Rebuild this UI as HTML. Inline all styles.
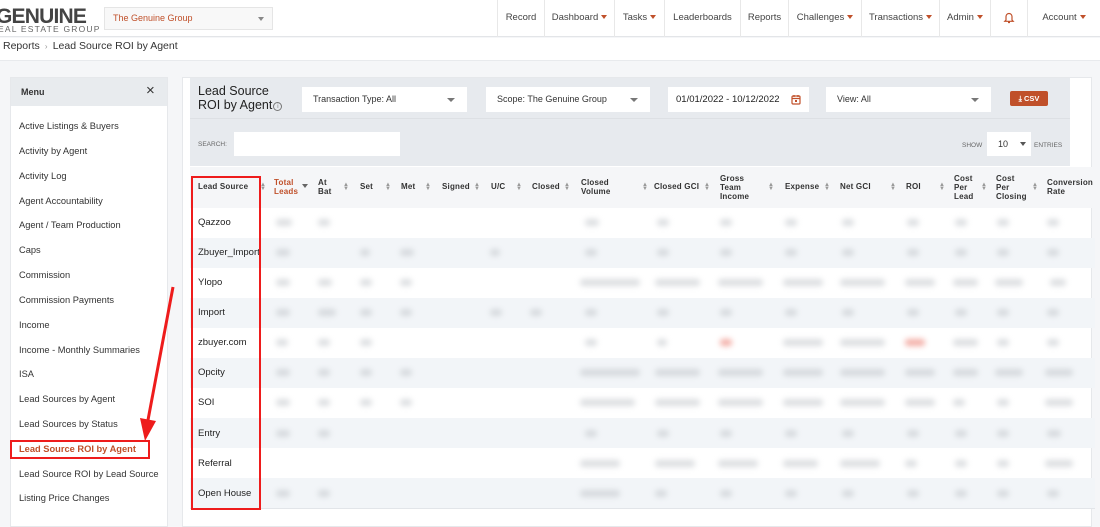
<!DOCTYPE html>
<html><head><meta charset="utf-8"><style>
*{margin:0;padding:0;box-sizing:border-box}
body{width:1100px;height:519px;overflow:hidden;background:#f5f6f8;font-family:"Liberation Sans",sans-serif;color:#333;position:relative}
.a{position:absolute}
.hdr{left:0;top:0;width:1100px;height:37px;background:#fff;border-bottom:1px solid #e3e5e8}
.nav{top:0;height:37px;font-size:9.5px;color:#444;line-height:36px;border-left:1px solid #e8e8e8;text-align:center}
.car{display:inline-block;width:0;height:0;border-left:3px solid transparent;border-right:3px solid transparent;border-top:4px solid #c0502a;margin-left:3px;vertical-align:1px}
.mi{left:19px;font-size:9.3px;color:#333;white-space:nowrap}
.sel{background:#fff;height:25px;font-size:9px;line-height:25px;padding-left:11px;color:#333}
.sel:after{content:"";position:absolute;right:12px;top:11px;border-left:4px solid transparent;border-right:4px solid transparent;border-top:4px solid #777}
.th{font-size:8px;font-weight:bold;color:#333;line-height:9px;letter-spacing:.2px}
.so{font-size:6px;color:#999;line-height:4px}
.row{left:190px;width:905px;height:30px}
.ls{left:198px;font-size:9.5px;color:#222}
.b{position:absolute;height:7px;background:#bfc3c8;filter:blur(3px);border-radius:3px;opacity:.55}
</style></head><body>
<div class="a hdr"></div>
<div class="a" style="left:-4px;top:6px;font-size:21px;font-weight:bold;color:#444;letter-spacing:-0.8px;line-height:21px">GENUINE</div>
<div class="a" style="left:-2px;top:24px;font-size:8.5px;color:#666;letter-spacing:1.2px">EAL ESTATE GROUP</div>
<div class="a" style="left:104px;top:7px;width:169px;height:23px;background:#f8f8f8;border:1px solid #e5e5e5;font-size:9px;color:#c0502a;line-height:21px;padding-left:8px">The Genuine Group<span style="position:absolute;right:8px;top:9px;border-left:3px solid transparent;border-right:3px solid transparent;border-top:4px solid #888"></span></div>
<div class="a nav" style="left:497px;width:47px">Record</div>
<div class="a nav" style="left:544px;width:70px">Dashboard<span class="car"></span></div>
<div class="a nav" style="left:614px;width:50px">Tasks<span class="car"></span></div>
<div class="a nav" style="left:664px;width:76px">Leaderboards</div>
<div class="a nav" style="left:740px;width:48px">Reports</div>
<div class="a nav" style="left:788px;width:73px">Challenges<span class="car"></span></div>
<div class="a nav" style="left:861px;width:78px">Transactions<span class="car"></span></div>
<div class="a nav" style="left:939px;width:51px">Admin<span class="car"></span></div>
<div class="a nav" style="left:990px;width:37px"><svg width="12" height="13" viewBox="0 0 12 13" style="vertical-align:middle"><path d="M3 9V5.5a3 3 0 0 1 6 0V9l1.2 1.3H1.8L3 9zM5 11.5h2" fill="none" stroke="#c0502a" stroke-width="1.2"/></svg></div>
<div class="a nav" style="left:1027px;width:73px">Account<span class="car"></span></div>
<div class="a" style="left:0;top:38px;width:1100px;height:23px;background:#fff;border-bottom:1px solid #e8eaed"></div>
<div class="a" style="left:3px;top:40px;font-size:10.5px;color:#333">Reports <span style="color:#999;font-size:8px">&nbsp;›&nbsp;</span> Lead Source ROI by Agent</div>

<div class="a" style="left:10px;top:77px;width:158px;height:450px;background:#fff;border:1px solid #e6e8eb"></div>
<div class="a" style="left:11px;top:78px;width:156px;height:28px;background:#e8ebee"></div>
<div class="a" style="left:21px;top:87px;font-size:9px;font-weight:bold;color:#333">Menu</div>
<div class="a" style="left:146px;top:82px;font-size:15px;color:#333">×</div>
<div class="a mi" style="top:121px">Active Listings &amp; Buyers</div>
<div class="a mi" style="top:146px">Activity by Agent</div>
<div class="a mi" style="top:171px">Activity Log</div>
<div class="a mi" style="top:196px">Agent Accountability</div>
<div class="a mi" style="top:220px">Agent / Team Production</div>
<div class="a mi" style="top:245px">Caps</div>
<div class="a mi" style="top:270px">Commission</div>
<div class="a mi" style="top:295px">Commission Payments</div>
<div class="a mi" style="top:320px">Income</div>
<div class="a mi" style="top:345px">Income - Monthly Summaries</div>
<div class="a mi" style="top:369px">ISA</div>
<div class="a mi" style="top:394px">Lead Sources by Agent</div>
<div class="a mi" style="top:419px">Lead Sources by Status</div>
<div class="a mi" style="top:444px;color:#c0502a;font-weight:bold">Lead Source ROI by Agent</div>
<div class="a" style="left:10px;top:440px;width:140px;height:19px;border:2px solid #ee1c1c"></div>
<div class="a mi" style="top:469px">Lead Source ROI by Lead Source</div>
<div class="a mi" style="top:493px">Listing Price Changes</div>

<div class="a" style="left:182px;top:77px;width:910px;height:450px;background:#fff;border:1px solid #e6e8eb"></div>
<div class="a" style="left:190px;top:78px;width:880px;height:88px;background:#e7eaee"></div>
<div class="a" style="left:190px;top:118px;width:880px;height:1px;background:#dde0e4"></div>
<div class="a" style="left:198px;top:84px;font-size:12.5px;color:#222;line-height:14px">Lead Source<br>ROI by Agent<span style="display:inline-block;width:9px;height:9px;border:1px solid #777;border-radius:50%;font-size:6px;text-align:center;line-height:8px;color:#777;margin-left:1px;vertical-align:1px">i</span></div>
<div class="a sel" style="left:302px;top:87px;width:165px">Transaction Type: All</div>
<div class="a sel" style="left:486px;top:87px;width:164px">Scope: The Genuine Group</div>
<div class="a" style="left:668px;top:87px;width:141px;height:25px;background:#fff;font-size:9.5px;line-height:25px;padding-left:8px;color:#222">01/01/2022 - 10/12/2022<svg style="position:absolute;right:8px;top:7px" width="10" height="11" viewBox="0 0 10 11"><rect x="1" y="2" width="8" height="8" rx="1" fill="none" stroke="#c0502a" stroke-width="1.2"/><path d="M1 4.5h8M3 1v2M7 1v2" stroke="#c0502a" stroke-width="1.2"/><rect x="4" y="6" width="2" height="2" fill="#c0502a"/></svg></div>
<div class="a sel" style="left:826px;top:87px;width:165px">View: All</div>
<div class="a" style="left:1010px;top:91px;width:38px;height:15px;background:#c0502a;border-radius:2px;color:#fff;font-size:7.5px;font-weight:bold;text-align:center;line-height:15px">⤓ CSV</div>
<div class="a" style="left:198px;top:141px;font-size:6.5px;color:#666">SEARCH:</div>
<div class="a" style="left:234px;top:132px;width:166px;height:24px;background:#fff"></div>
<div class="a" style="left:962px;top:142px;font-size:6.5px;color:#666">SHOW</div>
<div class="a" style="left:987px;top:132px;width:44px;height:24px;background:#fff;font-size:9px;line-height:24px;padding-left:11px">10<span style="position:absolute;right:5px;top:10px;border-left:3px solid transparent;border-right:3px solid transparent;border-top:4px solid #555"></span></div>
<div class="a" style="left:1034px;top:142px;font-size:6.5px;color:#666">ENTRIES</div>

<div class="a" style="left:190px;top:167px;width:905px;height:41px;background:#f5f6f8"></div>
<div class="a th" style="left:198px;top:182px">Lead Source</div>
<div class="a th" style="left:274px;top:178px;color:#c0502a">Total<br>Leads</div>
<div class="a th" style="left:318px;top:178px">At<br>Bat</div>
<div class="a th" style="left:360px;top:182px">Set</div>
<div class="a th" style="left:401px;top:182px">Met</div>
<div class="a th" style="left:442px;top:182px">Signed</div>
<div class="a th" style="left:491px;top:182px">U/C</div>
<div class="a th" style="left:532px;top:182px">Closed</div>
<div class="a th" style="left:581px;top:178px">Closed<br>Volume</div>
<div class="a th" style="left:654px;top:182px">Closed GCI</div>
<div class="a th" style="left:720px;top:174px">Gross<br>Team<br>Income</div>
<div class="a th" style="left:785px;top:182px">Expense</div>
<div class="a th" style="left:840px;top:182px">Net GCI</div>
<div class="a th" style="left:906px;top:182px">ROI</div>
<div class="a th" style="left:954px;top:174px">Cost<br>Per<br>Lead</div>
<div class="a th" style="left:996px;top:174px">Cost<br>Per<br>Closing</div>
<div class="a th" style="left:1047px;top:178px">Conversion<br>Rate</div>
<div class="a so" style="left:260px;top:183px">▲<br>▼</div>
<div class="a" style="left:302px;top:184px;border-left:3px solid transparent;border-right:3px solid transparent;border-top:4px solid #666"></div>
<div class="a so" style="left:343px;top:183px">▲<br>▼</div>
<div class="a so" style="left:385px;top:183px">▲<br>▼</div>
<div class="a so" style="left:425px;top:183px">▲<br>▼</div>
<div class="a so" style="left:474px;top:183px">▲<br>▼</div>
<div class="a so" style="left:516px;top:183px">▲<br>▼</div>
<div class="a so" style="left:564px;top:183px">▲<br>▼</div>
<div class="a so" style="left:642px;top:183px">▲<br>▼</div>
<div class="a so" style="left:704px;top:183px">▲<br>▼</div>
<div class="a so" style="left:768px;top:183px">▲<br>▼</div>
<div class="a so" style="left:824px;top:183px">▲<br>▼</div>
<div class="a so" style="left:890px;top:183px">▲<br>▼</div>
<div class="a so" style="left:939px;top:183px">▲<br>▼</div>
<div class="a so" style="left:981px;top:183px">▲<br>▼</div>
<div class="a so" style="left:1032px;top:183px">▲<br>▼</div>

<div class="a row" style="top:238px;background:#f2f5f8"></div>
<div class="a row" style="top:298px;background:#f2f5f8"></div>
<div class="a row" style="top:358px;background:#f2f5f8"></div>
<div class="a row" style="top:418px;background:#f2f5f8"></div>
<div class="a row" style="top:478px;background:#f2f5f8"></div>
<div class="a" style="left:190px;top:508px;width:905px;height:1px;background:#e2e5e9"></div>

<div class="a ls" style="top:217px">Qazzoo</div>
<div class="a ls" style="top:247px">Zbuyer_Import</div>
<div class="a ls" style="top:277px">Ylopo</div>
<div class="a ls" style="top:307px">Import</div>
<div class="a ls" style="top:337px">zbuyer.com</div>
<div class="a ls" style="top:367px">Opcity</div>
<div class="a ls" style="top:397px">SOI</div>
<div class="a ls" style="top:428px">Entry</div>
<div class="a ls" style="top:458px">Referral</div>
<div class="a ls" style="top:488px">Open House</div>

<div class="a" style="left:0;top:0">
<div class="b" style="left:276px;top:219px;width:16px"></div><div class="b" style="left:318px;top:219px;width:12px"></div><div class="b" style="left:585px;top:219px;width:14px"></div><div class="b" style="left:657px;top:219px;width:12px"></div><div class="b" style="left:720px;top:219px;width:12px"></div><div class="b" style="left:785px;top:219px;width:12px"></div><div class="b" style="left:842px;top:219px;width:12px"></div><div class="b" style="left:907px;top:219px;width:12px"></div><div class="b" style="left:955px;top:219px;width:12px"></div><div class="b" style="left:997px;top:219px;width:12px"></div><div class="b" style="left:1047px;top:219px;width:12px"></div>
<div class="b" style="left:276px;top:249px;width:14px"></div><div class="b" style="left:360px;top:249px;width:10px"></div><div class="b" style="left:400px;top:249px;width:14px"></div><div class="b" style="left:490px;top:249px;width:10px"></div><div class="b" style="left:585px;top:249px;width:12px"></div><div class="b" style="left:657px;top:249px;width:12px"></div><div class="b" style="left:720px;top:249px;width:12px"></div><div class="b" style="left:785px;top:249px;width:12px"></div><div class="b" style="left:842px;top:249px;width:12px"></div><div class="b" style="left:907px;top:249px;width:12px"></div><div class="b" style="left:955px;top:249px;width:12px"></div><div class="b" style="left:997px;top:249px;width:12px"></div><div class="b" style="left:1047px;top:249px;width:12px"></div>
<div class="b" style="left:276px;top:279px;width:14px"></div><div class="b" style="left:318px;top:279px;width:14px"></div><div class="b" style="left:360px;top:279px;width:12px"></div><div class="b" style="left:400px;top:279px;width:12px"></div><div class="b" style="left:580px;top:279px;width:60px"></div><div class="b" style="left:655px;top:279px;width:45px"></div><div class="b" style="left:718px;top:279px;width:45px"></div><div class="b" style="left:783px;top:279px;width:40px"></div><div class="b" style="left:840px;top:279px;width:45px"></div><div class="b" style="left:905px;top:279px;width:30px"></div><div class="b" style="left:953px;top:279px;width:25px"></div><div class="b" style="left:995px;top:279px;width:28px"></div><div class="b" style="left:1050px;top:279px;width:16px"></div>
<div class="b" style="left:276px;top:309px;width:14px"></div><div class="b" style="left:318px;top:309px;width:18px"></div><div class="b" style="left:360px;top:309px;width:12px"></div><div class="b" style="left:400px;top:309px;width:12px"></div><div class="b" style="left:490px;top:309px;width:12px"></div><div class="b" style="left:530px;top:309px;width:12px"></div><div class="b" style="left:585px;top:309px;width:12px"></div><div class="b" style="left:657px;top:309px;width:12px"></div><div class="b" style="left:720px;top:309px;width:12px"></div><div class="b" style="left:785px;top:309px;width:12px"></div><div class="b" style="left:842px;top:309px;width:12px"></div><div class="b" style="left:907px;top:309px;width:12px"></div><div class="b" style="left:955px;top:309px;width:12px"></div><div class="b" style="left:997px;top:309px;width:12px"></div><div class="b" style="left:1047px;top:309px;width:12px"></div>
<div class="b" style="left:276px;top:339px;width:12px"></div><div class="b" style="left:318px;top:339px;width:12px"></div><div class="b" style="left:360px;top:339px;width:12px"></div><div class="b" style="left:585px;top:339px;width:12px"></div><div class="b" style="left:657px;top:339px;width:10px"></div><div class="b" style="left:720px;top:339px;width:12px;background:#f09a90;opacity:.8"></div><div class="b" style="left:783px;top:339px;width:40px"></div><div class="b" style="left:840px;top:339px;width:45px"></div><div class="b" style="left:905px;top:339px;width:20px;background:#f09a90;opacity:.8"></div><div class="b" style="left:953px;top:339px;width:25px"></div><div class="b" style="left:997px;top:339px;width:12px"></div><div class="b" style="left:1047px;top:339px;width:12px"></div>
<div class="b" style="left:276px;top:369px;width:14px"></div><div class="b" style="left:318px;top:369px;width:12px"></div><div class="b" style="left:360px;top:369px;width:12px"></div><div class="b" style="left:400px;top:369px;width:12px"></div><div class="b" style="left:580px;top:369px;width:60px"></div><div class="b" style="left:655px;top:369px;width:45px"></div><div class="b" style="left:718px;top:369px;width:45px"></div><div class="b" style="left:783px;top:369px;width:40px"></div><div class="b" style="left:840px;top:369px;width:45px"></div><div class="b" style="left:905px;top:369px;width:30px"></div><div class="b" style="left:953px;top:369px;width:25px"></div><div class="b" style="left:995px;top:369px;width:28px"></div><div class="b" style="left:1045px;top:369px;width:28px"></div>
<div class="b" style="left:276px;top:399px;width:14px"></div><div class="b" style="left:318px;top:399px;width:12px"></div><div class="b" style="left:360px;top:399px;width:12px"></div><div class="b" style="left:400px;top:399px;width:12px"></div><div class="b" style="left:580px;top:399px;width:55px"></div><div class="b" style="left:655px;top:399px;width:45px"></div><div class="b" style="left:718px;top:399px;width:45px"></div><div class="b" style="left:783px;top:399px;width:40px"></div><div class="b" style="left:840px;top:399px;width:45px"></div><div class="b" style="left:905px;top:399px;width:30px"></div><div class="b" style="left:953px;top:399px;width:12px"></div><div class="b" style="left:997px;top:399px;width:12px"></div><div class="b" style="left:1045px;top:399px;width:28px"></div>
<div class="b" style="left:276px;top:430px;width:14px"></div><div class="b" style="left:318px;top:430px;width:12px"></div><div class="b" style="left:585px;top:430px;width:12px"></div><div class="b" style="left:657px;top:430px;width:12px"></div><div class="b" style="left:720px;top:430px;width:12px"></div><div class="b" style="left:785px;top:430px;width:12px"></div><div class="b" style="left:842px;top:430px;width:12px"></div><div class="b" style="left:907px;top:430px;width:12px"></div><div class="b" style="left:955px;top:430px;width:12px"></div><div class="b" style="left:997px;top:430px;width:12px"></div><div class="b" style="left:1047px;top:430px;width:14px"></div>
<div class="b" style="left:580px;top:460px;width:40px"></div><div class="b" style="left:655px;top:460px;width:40px"></div><div class="b" style="left:718px;top:460px;width:40px"></div><div class="b" style="left:783px;top:460px;width:35px"></div><div class="b" style="left:840px;top:460px;width:40px"></div><div class="b" style="left:905px;top:460px;width:12px"></div><div class="b" style="left:955px;top:460px;width:12px"></div><div class="b" style="left:997px;top:460px;width:12px"></div><div class="b" style="left:1045px;top:460px;width:28px"></div>
<div class="b" style="left:276px;top:490px;width:14px"></div><div class="b" style="left:318px;top:490px;width:12px"></div><div class="b" style="left:580px;top:490px;width:40px"></div><div class="b" style="left:655px;top:490px;width:12px"></div><div class="b" style="left:720px;top:490px;width:12px"></div><div class="b" style="left:785px;top:490px;width:12px"></div><div class="b" style="left:842px;top:490px;width:12px"></div><div class="b" style="left:907px;top:490px;width:12px"></div><div class="b" style="left:955px;top:490px;width:12px"></div><div class="b" style="left:997px;top:490px;width:12px"></div><div class="b" style="left:1047px;top:490px;width:12px"></div>
</div>

<div class="a" style="left:191px;top:176px;width:70px;height:334px;border:2px solid #ee1c1c"></div>
<svg class="a" style="left:0;top:0" width="1100" height="519"><line x1="173" y1="287" x2="148" y2="420" stroke="#ee1c1c" stroke-width="3"/><polygon points="140,418 156,421 145,441" fill="#ee1c1c"/></svg>
</body></html>
